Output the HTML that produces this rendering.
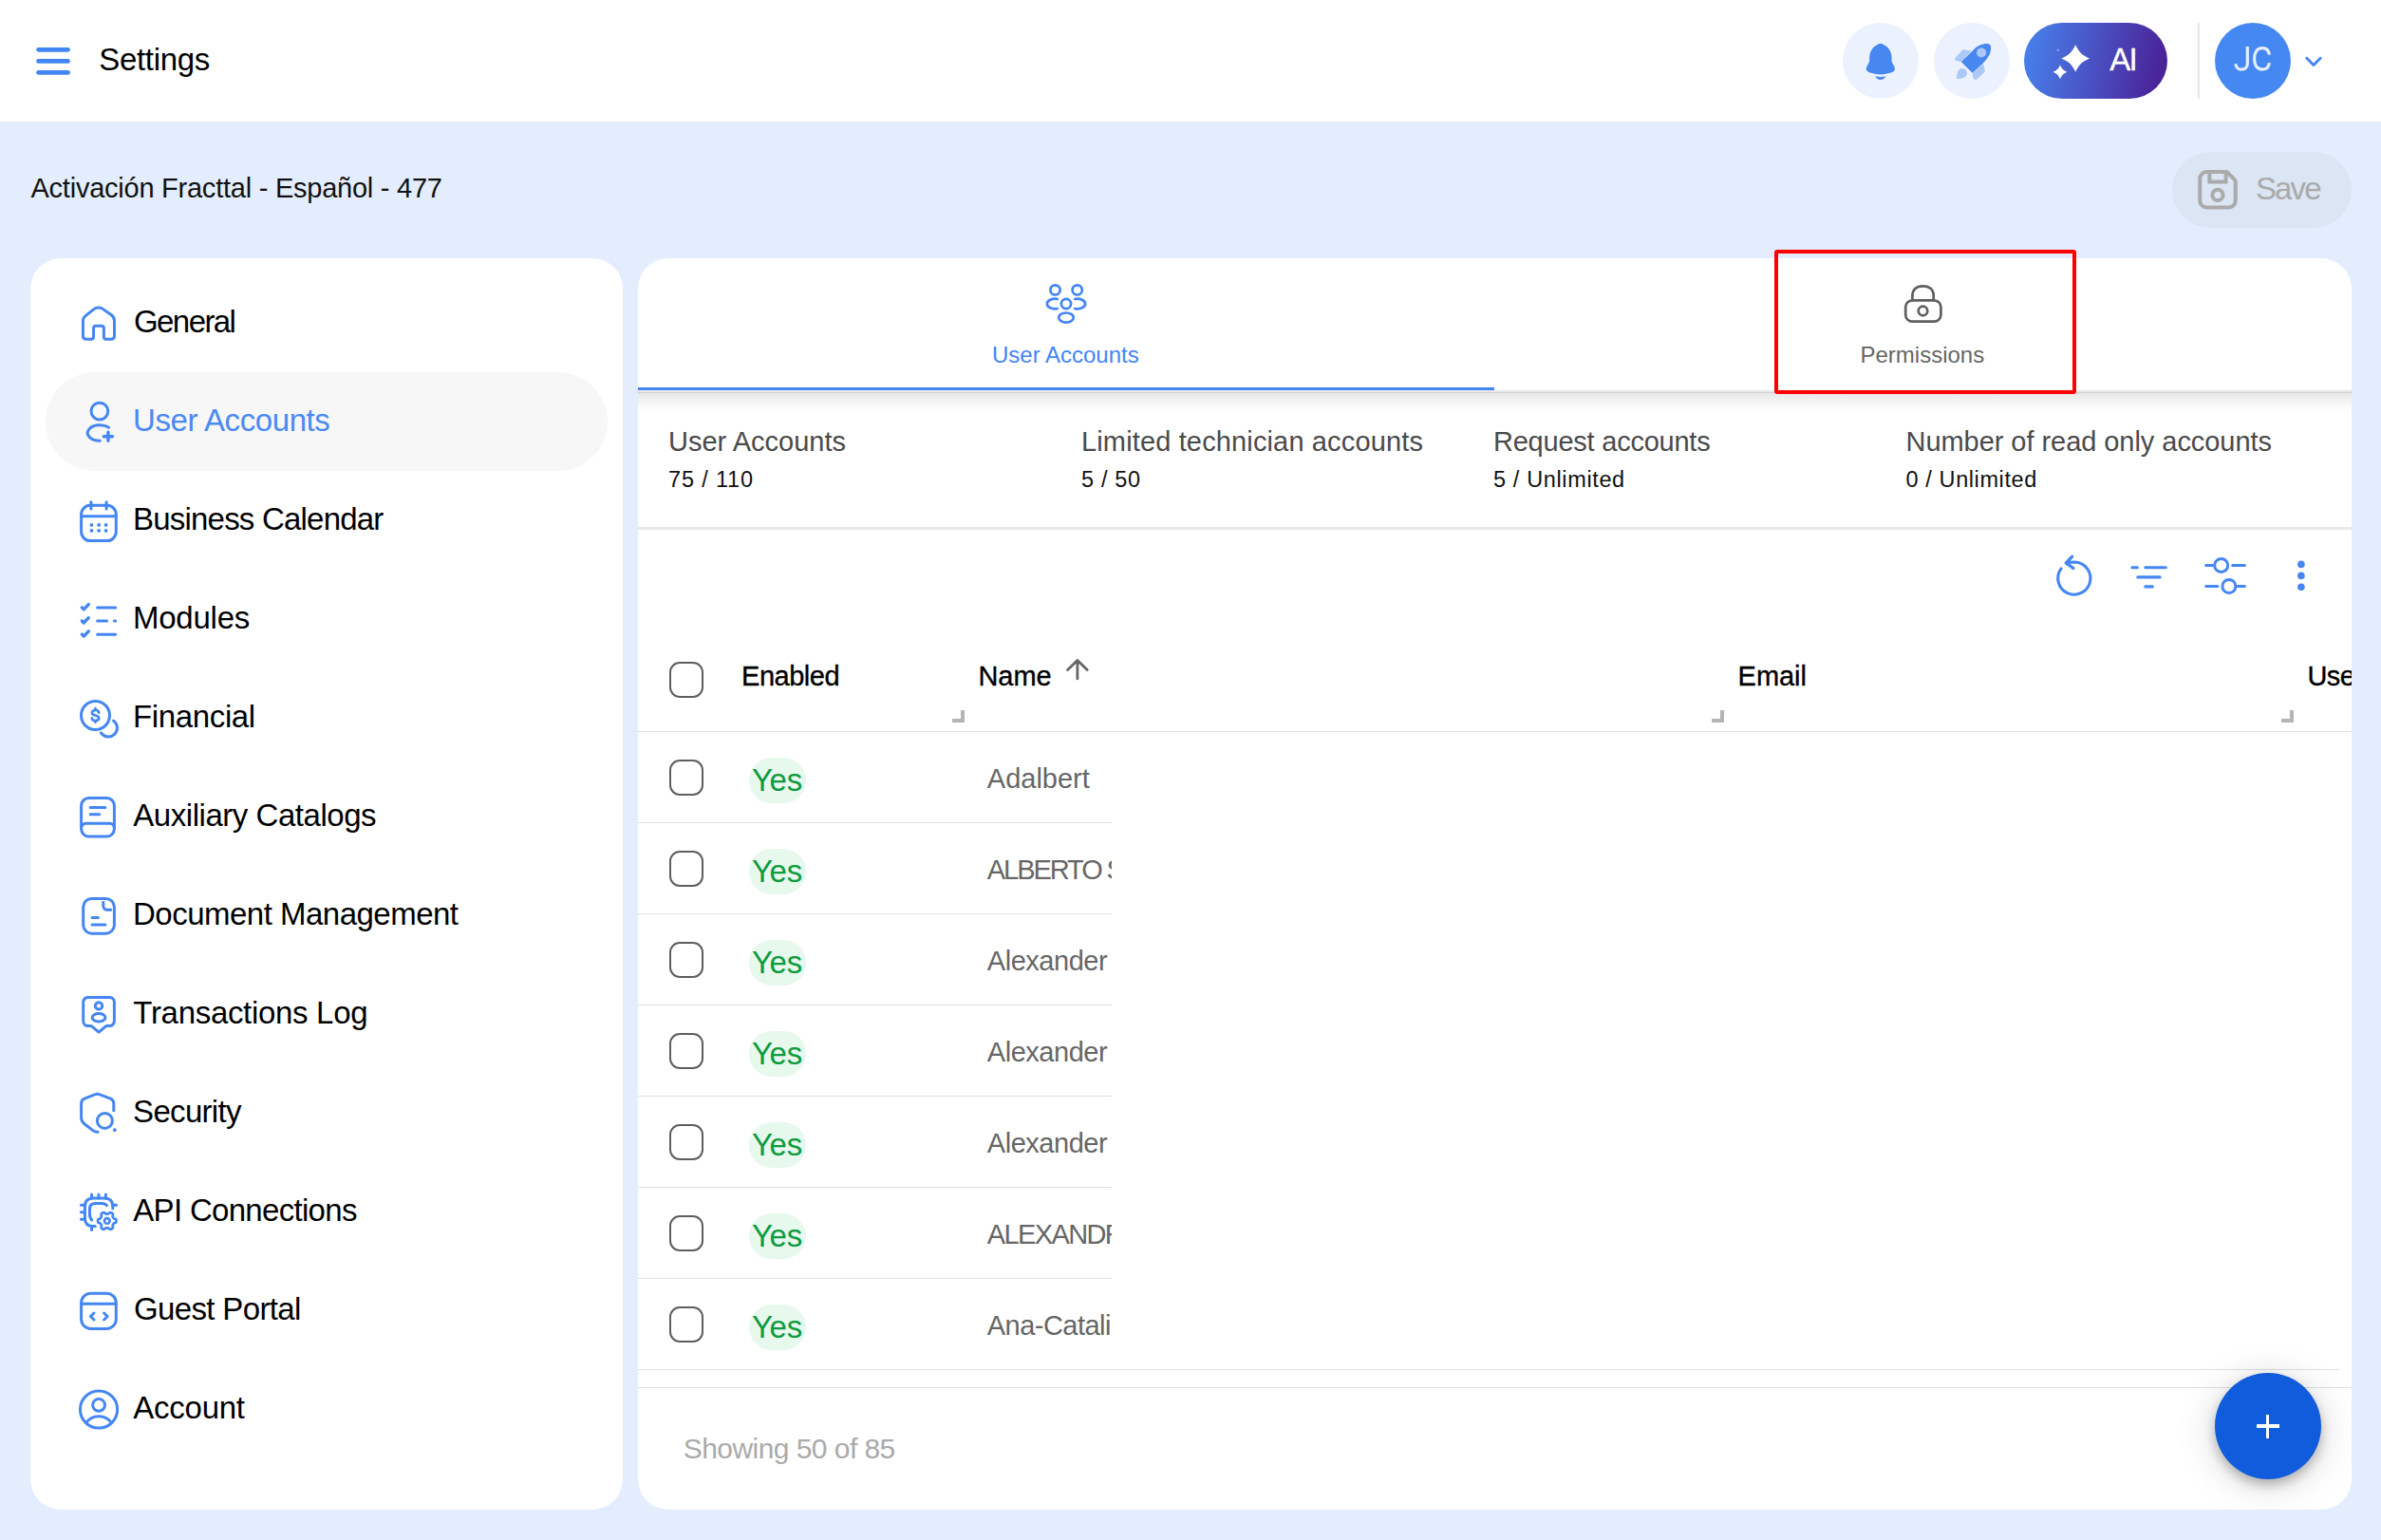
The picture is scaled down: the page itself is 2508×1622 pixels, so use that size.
<!DOCTYPE html>
<html><head><meta charset="utf-8"><title>Settings</title>
<style>
html,body{margin:0;padding:0}
body{width:2508px;height:1622px;overflow:hidden;background:#e3edfd;position:relative;font-family:"Liberation Sans",sans-serif}
.a{position:absolute}
.t{position:absolute;white-space:pre;line-height:1}
svg{position:absolute;overflow:visible}
.card{position:absolute;background:#fff;border-radius:32px}
.ln{position:absolute;background:#dfdfdf;height:1px}
.cb{position:absolute;width:32px;height:34px;border:2px solid #5e5e5e;border-radius:11px;background:#fff}
.yes{position:absolute;width:60px;height:48px;border-radius:24px;background:#e7f8ed}
.hd{position:absolute;width:9px;height:9px;border-right:4px solid #b4b4b4;border-bottom:4px solid #b4b4b4}
</style></head><body>

<div class="a" style="left:0;top:0;width:2508px;height:128px;background:#fff"></div>
<svg style="left:38px;top:49px" width="36" height="30" viewBox="0 0 36 30"><g stroke="#4285f4" stroke-width="4.7" stroke-linecap="round"><path d="M2.5 3.3H33.6M2.5 15.4H33.6M2.5 27.4H33.6"/></g></svg>
<div class="t" style="left:104.2px;top:46.4px;font-size:33px;color:#000;letter-spacing:-0.30px;">Settings</div>
<div class="a" style="left:1941px;top:24px;width:80px;height:80px;border-radius:50%;background:#ebf2fe"></div>
<div class="a" style="left:2037px;top:24px;width:80px;height:80px;border-radius:50%;background:#ebf2fe"></div>
<svg style="left:1961px;top:40px" width="40" height="48" viewBox="0 0 40 48" ><path fill="#4787f0" d="M19.85 5.90C18.20 5.90 16.80 6.60 15.95 7.60C13.50 8.60 11.30 10.80 9.90 13.40C8.60 15.80 8.15 18.20 8.15 21.00C8.15 21.90 8.15 22.80 8.15 23.60C8.15 25.00 7.60 26.00 6.90 27.20C6.40 28.10 5.90 29.00 5.40 29.90C4.60 31.40 4.50 33.00 5.40 34.50C6.30 35.80 8.20 36.30 10.50 37.00C13.50 37.90 16.50 38.40 19.85 38.40C23.20 38.40 26.20 37.90 29.20 37.00C31.50 36.30 33.40 35.80 34.30 34.50C35.20 33.00 35.10 31.40 34.30 29.90C33.80 29.00 33.30 28.10 32.80 27.20C32.10 26.00 31.55 25.00 31.55 23.60C31.55 22.80 31.55 21.90 31.55 21.00C31.55 18.20 31.10 15.80 29.80 13.40C28.40 10.80 26.20 8.60 23.75 7.60C22.90 6.60 21.50 5.90 19.85 5.90ZM14.3 40.2Q19.85 41.7 25.4 40.2C24.4 42.6 22.3 44 19.85 44C17.4 44 15.3 42.6 14.3 40.2Z"/></svg>
<svg style="left:2055px;top:40px" width="48" height="48" viewBox="0 0 48 48" ><g fill="#abc8f7"><path d="M13.600 12.200L21.500 13.500L11 25.600L5.600 24Q3.200 23.200 4.500 21L11.500 13.200Q12.300 12 13.600 12.200Z"/><path d="M33.700 26.300L35.700 33.500Q36.100 35 35 36.200L28 43Q26 44.600 24.500 43.500Q23.200 42.500 23 40.500L22.600 36.900Z"/><path d="M12 32C15 32 17 34.300 16.900 37C16.800 39.500 15.500 41 13.500 41.700C11.500 42.400 8.500 43 6.800 43C5.900 43 5.800 42.300 5.900 41.500C6.200 39 6.600 36.500 7.600 34.700C8.600 33 10.200 32 12 32Z"/></g><path fill="#4787f0" d="M10.870 25.360L26.060 10.360C28 8.600 31.500 6.600 35.800 6.100C37.500 5.900 39 6 39.700 6.270C41 6.700 41.800 7.500 42 9C42.300 11 42 13.500 41.260 15.820C40.500 18.300 38 22 35.030 25.170L22.560 36.860Z"/><circle cx="32.100" cy="15.430" r="5.050" fill="#abc8f7"/></svg>
<div class="a" style="left:2132px;top:24px;width:151px;height:80px;border-radius:40px;background:linear-gradient(100deg,#4684ee 0%,#4a55c6 45%,#4a1b92 100%)"></div>
<svg style="left:2156px;top:40px" width="52" height="48" viewBox="0 0 52 48" ><path fill="#fff" d="M30.2 7.199999999999999C34.196 15.322399999999998 36.5936 17.639 45.0 21.5C36.5936 25.361 34.196 27.6776 30.2 35.8C26.204 27.6776 23.806399999999996 25.361 15.399999999999999 21.5C23.806399999999996 17.639 26.204 15.322399999999998 30.2 7.199999999999999Z"/><path fill="#fff" d="M14 28.4C16.025 32.603199999999994 17.240000000000002 33.802 21.5 35.8C17.240000000000002 37.797999999999995 16.025 38.9968 14 43.199999999999996C11.975 38.9968 10.76 37.797999999999995 6.5 35.8C10.76 33.802 11.975 32.603199999999994 14 28.4Z"/><circle cx="11.800" cy="12.800" r="1.300" fill="#8fa2e6"/></svg>
<div class="t" style="left:2222.2px;top:45.7px;font-size:33px;color:#fff;letter-spacing:-1.60px;-webkit-text-stroke:0.3px #fff;">AI</div>
<div class="a" style="left:2315px;top:24px;width:2px;height:80px;background:#e6e6e6"></div>
<div class="a" style="left:2333px;top:24px;width:80px;height:80px;border-radius:50%;background:#4688f1"></div>
<svg style="left:2340px;top:40px" width="64" height="48" viewBox="0 0 64 48"><g fill="none" stroke="#e6eefd" stroke-width="3.2"><path d="M27.3 9.1V27C27.3 31 24.6 33.2 21.2 33.2C17.6 33.2 15 31 14.9 27.2"/><path d="M50.4 17.6C49.8 13 47 10.6 43 10.6C37.600 10.600 34.600 14.900 34.600 21.850C34.600 28.800 37.600 33.100 43 33.100C47 33.100 49.800 30.700 50.400 26.100"/></g></svg>
<svg style="left:2426px;top:57px" width="22" height="16" viewBox="0 0 22 16"><path d="M3.8 4.3L11 11.5L18.2 4.3" fill="none" stroke="#4687f2" stroke-width="3" stroke-linecap="round" stroke-linejoin="round"/></svg>
<div class="t" style="left:32.5px;top:183.8px;font-size:29px;color:#111;letter-spacing:-0.24px;">Activación Fracttal - Español - 477</div>
<div class="a" style="left:2288px;top:160px;width:189px;height:80px;border-radius:40px;background:#dbe5f4"></div>
<svg style="left:2314px;top:178px" width="44" height="44" viewBox="0 0 44 44" ><g fill="none" stroke="#aaa" stroke-width="4" stroke-linecap="round" stroke-linejoin="round"><path d="M10.300 3.100H30.600a2.500 2.500 0 0 1 1.800 0.700L40 11.400a2.500 2.500 0 0 1 0.700 1.800V33.500a7 7 0 0 1-7 7H10.300a7 7 0 0 1-7-7V10.100a7 7 0 0 1 7-7Z"/><path d="M13.400 3.300V13.600H30.600V3.300" stroke-linejoin="miter"/><circle cx="22" cy="27.400" r="5.600"/></g></svg>
<div class="t" style="left:2375.9px;top:181.9px;font-size:33px;color:#aaa;letter-spacing:-1.83px;">Save</div>
<div class="card" style="left:32px;top:272px;width:624px;height:1318px"></div>
<div class="a" style="left:48px;top:392px;width:592px;height:104px;border-radius:52px;background:#f7f7f7"></div>
<svg style="left:84px;top:319px" width="40" height="44" viewBox="0 0 40 44" ><g fill="none" stroke="#4486f3" stroke-width="3" stroke-linecap="round" stroke-linejoin="round"><path d="M14.55 26.6V35.8Q14.55 38.3 12.05 38.3H6.74Q3.44 38.3 3.44 35V18.83C3.44 16.4 4.5 14.9 6.36 13.38L14.93 6.56C17.5 4.6 21.8 4.6 24.29 6.36L33.64 12.99C35.5 14.5 36.48 16.2 36.48 18.83V35Q36.48 38.3 33.18 38.3H27.88Q25.38 38.3 25.38 35.8V26.6Q25.38 24.29 23.08 24.29H16.85Q14.55 24.29 14.55 26.6Z"/></g></svg>
<div class="t" style="left:141.0px;top:321.9px;font-size:33px;color:#000;letter-spacing:-1.58px;">General</div>
<svg style="left:84px;top:423px" width="40" height="44" viewBox="0 0 40 44" ><g fill="none" stroke="#4486f3" stroke-width="3" stroke-linecap="round" stroke-linejoin="round"><circle cx="20.9" cy="10.1" r="8.9"/><path d="M30.6 27.2A13 8.3 0 1 0 21.3 41.3"/><path d="M25.3 36.7H34.5M29.9 32.2V41.2" stroke-width="3.4"/></g></svg>
<div class="t" style="left:140.0px;top:425.9px;font-size:33px;color:#4a8af4;letter-spacing:-0.41px;">User Accounts</div>
<svg style="left:84px;top:527px" width="40" height="44" viewBox="0 0 40 44" ><g fill="none" stroke="#4486f3" stroke-width="3" stroke-linecap="round" stroke-linejoin="round"><rect x="1.6" y="5.3" width="36.7" height="37.3" rx="9.5" ry="9.5"/><path d="M11.9 1.8V9M28.1 1.8V9M2 16.7H38"/></g><g fill="#4486f3"><circle cx="12.4" cy="25.9" r="1.9"/><circle cx="12.4" cy="31.9" r="1.9"/><circle cx="20.1" cy="25.9" r="1.9"/><circle cx="20.1" cy="31.9" r="1.9"/><circle cx="27.6" cy="25.9" r="1.9"/><circle cx="27.6" cy="31.9" r="1.9"/></g></svg>
<div class="t" style="left:140.0px;top:530.0px;font-size:33px;color:#000;letter-spacing:-0.79px;">Business Calendar</div>
<svg style="left:84px;top:631px" width="40" height="44" viewBox="0 0 40 44" ><g fill="none" stroke="#4486f3" stroke-width="3" stroke-linecap="round" stroke-linejoin="round"><path d="M2.3 8.9L4.3 10.9L9.3 5.6M2.3 23.0L4.3 25.0L9.3 19.7M2.3 37.1L4.3 39.1L9.3 33.8" stroke-width="3.4"/><path d="M18.6 9H37.7M18.6 23.1H28.6M36.4 23.1H37.7M18.6 37.2H37.7"/></g></svg>
<div class="t" style="left:140.0px;top:634.0px;font-size:33px;color:#000;letter-spacing:-0.25px;">Modules</div>
<svg style="left:84px;top:735px" width="40" height="44" viewBox="0 0 40 44" ><g fill="none" stroke="#4486f3" stroke-width="3" stroke-linecap="round" stroke-linejoin="round"><circle cx="16.5" cy="18.5" r="15"/><path d="M35.6 24.2A9.3 9.3 0 1 1 22.4 36.9"/></g><g fill="none" stroke="#4486f3" stroke-width="2.7" stroke-linecap="round" stroke-linejoin="round"><path d="M20.1 15.7C20.1 14 18.7 13 16.5 13C14.3 13 12.9 14.1 12.9 15.8C12.9 17.4 14.2 18 16.5 18.5C18.8 19 20.2 19.7 20.2 21.3C20.2 23 18.8 24 16.5 24C14.2 24 12.8 23 12.8 21.3M16.5 11.2V13M16.5 24V25.8"/></g></svg>
<div class="t" style="left:140.0px;top:738.0px;font-size:33px;color:#000;letter-spacing:-0.36px;">Financial</div>
<svg style="left:84px;top:839px" width="40" height="44" viewBox="0 0 40 44" ><g fill="none" stroke="#4486f3" stroke-width="3" stroke-linecap="round" stroke-linejoin="round"><rect x="1.6" y="1.5" width="34.8" height="40.6" rx="8" ry="8"/><path d="M1.6 33.2a5 5 0 0 1 5-5H31.4a5 5 0 0 1 5 5M11.1 11.5H26.9M11.1 18.8H20.7"/></g></svg>
<div class="t" style="left:140.3px;top:842.0px;font-size:33px;color:#000;letter-spacing:-0.46px;">Auxiliary Catalogs</div>
<svg style="left:84px;top:943px" width="40" height="44" viewBox="0 0 40 44" ><g fill="none" stroke="#4486f3" stroke-width="3" stroke-linecap="round" stroke-linejoin="round"><rect x="3.7" y="3.4" width="32.7" height="36.8" rx="9" ry="9"/><path d="M24.8 7.2V11.3a4 4 0 0 0 4 4H32.6M13 23.5H19.4M13 31H26.9"/></g></svg>
<div class="t" style="left:140.0px;top:946.0px;font-size:33px;color:#000;letter-spacing:-0.51px;">Document Management</div>
<svg style="left:84px;top:1047px" width="40" height="44" viewBox="0 0 40 44" ><g fill="none" stroke="#4486f3" stroke-width="3" stroke-linecap="round" stroke-linejoin="round"><path d="M8.7 3.4H31.4a5 5 0 0 1 5 5V28.6a5 5 0 0 1-5 5H29.2a4 4 0 0 0-2.6 1L20.06 40.2L13.5 34.6a4 4 0 0 0-2.6-1H8.7a5 5 0 0 1-5-5V8.4a5 5 0 0 1 5-5Z"/><circle cx="20.06" cy="12.4" r="3.7"/><ellipse cx="20.06" cy="24.8" rx="6.9" ry="4.3"/></g></svg>
<div class="t" style="left:140.3px;top:1050.0px;font-size:33px;color:#000;letter-spacing:-0.31px;">Transactions Log</div>
<svg style="left:84px;top:1151px" width="40" height="44" viewBox="0 0 40 44" ><g fill="none" stroke="#4486f3" stroke-width="3" stroke-linecap="round" stroke-linejoin="round"><path d="M35.8 18.7V11.2a5.5 5.5 0 0 0-3.4-5.1L20.6 1.7a5.5 5.5 0 0 0-4.2 0L5 6.1a5.5 5.5 0 0 0-3.4 5.1V26.3a8 8 0 0 0 3 6.2L13.8 39.6a8 8 0 0 0 5.2 1.7"/><circle cx="26.4" cy="29.4" r="8"/></g><circle cx="36.8" cy="39.2" r="1.9" fill="#4486f3"/></svg>
<div class="t" style="left:140.1px;top:1154.0px;font-size:33px;color:#000;letter-spacing:-0.69px;">Security</div>
<svg style="left:84px;top:1255px" width="40" height="44" viewBox="0 0 40 44" ><g fill="none" stroke="#4486f3" stroke-width="3" stroke-linecap="round" stroke-linejoin="round"><path d="M34.8 17.7V15.5C34.8 9.5 32 6.9 26 6.9H14.2C8.2 6.9 5.4 9.5 5.4 15.5V28C5.4 34 8.2 36.6 14.2 36.6H16.3"/><path d="M28.4 14.6C27.2 13 25.5 12.4 23.5 12.4H16.5C12.5 12.4 10.45 14.4 10.45 18.4V23C10.45 26 11 28.3 12.6 29.9"/><path d="M12.52 3.1V6.9M19.92 3.1V6.9M27.4 3.1V6.9M1.4 14.35H5.4M1.4 21.75H5.4M1.4 29.15H5.4M34.8 14.35H38.6M12.52 36.6V40.5"/><path d="M38.49 30.90 L38.46 31.54 L38.34 32.16 L37.96 32.73 L37.03 33.11 L36.09 33.38 L35.66 33.75 L35.40 34.17 L35.16 34.59 L34.91 35.01 L34.68 35.44 L34.58 35.99 L34.82 36.95 L34.95 37.95 L34.64 38.55 L34.16 38.97 L33.63 39.32 L33.06 39.61 L32.46 39.81 L31.78 39.78 L30.98 39.16 L30.28 38.48 L29.74 38.29 L29.25 38.27 L28.77 38.28 L28.29 38.27 L27.80 38.29 L27.26 38.48 L26.56 39.16 L25.76 39.78 L25.08 39.81 L24.48 39.61 L23.91 39.32 L23.38 38.97 L22.90 38.55 L22.59 37.95 L22.72 36.95 L22.96 35.99 L22.86 35.44 L22.63 35.01 L22.38 34.59 L22.14 34.17 L21.88 33.75 L21.45 33.38 L20.51 33.11 L19.58 32.73 L19.20 32.16 L19.08 31.54 L19.05 30.90 L19.08 30.26 L19.20 29.64 L19.58 29.07 L20.51 28.69 L21.45 28.42 L21.88 28.05 L22.14 27.63 L22.38 27.21 L22.63 26.79 L22.86 26.36 L22.96 25.81 L22.72 24.85 L22.59 23.85 L22.90 23.25 L23.38 22.83 L23.91 22.48 L24.48 22.19 L25.08 21.99 L25.76 22.02 L26.56 22.64 L27.26 23.32 L27.80 23.51 L28.29 23.53 L28.77 23.52 L29.25 23.53 L29.74 23.51 L30.28 23.32 L30.98 22.64 L31.78 22.02 L32.46 21.99 L33.06 22.19 L33.63 22.48 L34.16 22.83 L34.64 23.25 L34.95 23.85 L34.82 24.85 L34.58 25.81 L34.68 26.36 L34.91 26.79 L35.16 27.21 L35.40 27.63 L35.66 28.05 L36.09 28.42 L37.03 28.69 L37.96 29.07 L38.34 29.64 L38.46 30.26Z" stroke-width="2.7"/><circle cx="28.77" cy="30.9" r="2.85" stroke-width="2.7"/></g></svg>
<div class="t" style="left:140.3px;top:1258.0px;font-size:33px;color:#000;letter-spacing:-0.69px;">API Connections</div>
<svg style="left:84px;top:1359px" width="40" height="44" viewBox="0 0 40 44" ><g fill="none" stroke="#4486f3" stroke-width="3" stroke-linecap="round" stroke-linejoin="round"><rect x="1.6" y="3.2" width="36.7" height="37.2" rx="10" ry="10"/><path d="M2 14.3H38M15 24L11.4 27.5L15 31M25.6 24L29.2 27.5L25.6 31"/></g></svg>
<div class="t" style="left:141.0px;top:1362.0px;font-size:33px;color:#000;letter-spacing:-0.64px;">Guest Portal</div>
<svg style="left:84px;top:1463px" width="40" height="44" viewBox="0 0 40 44" ><g fill="none" stroke="#4486f3" stroke-width="3" stroke-linecap="round" stroke-linejoin="round"><circle cx="20.05" cy="21.5" r="19.6"/><circle cx="20.05" cy="16.8" r="6.4"/><path d="M6.9 35.2A16.5 16.5 0 0 1 33.2 35.2"/></g></svg>
<div class="t" style="left:140.3px;top:1466.0px;font-size:33px;color:#000;letter-spacing:-0.25px;">Account</div>
<div class="card" style="left:672px;top:272px;width:1805px;height:1318px;overflow:hidden">
<div class="a" style="left:-672px;top:-272px;width:2508px;height:1622px">
<div class="a" style="left:672px;top:411px;width:1805px;height:2px;background:#e8e8e8"></div><div class="a" style="left:672px;top:413px;width:1805px;height:1px;background:#d2d2d2"></div><div class="a" style="left:672px;top:414px;width:1805px;height:23px;background:linear-gradient(to bottom,#e4e4e4 0,#e8e8e8 1px,#ececec 3px,#f0f0f0 6.4px,#f5f5f5 10px,#fafafa 13.4px,#fdfdfd 17px,#fff 22px)"></div>
<div class="a" style="left:672px;top:408px;width:902px;height:3px;background:#4285f4"></div>
<svg style="left:1100px;top:296px" width="48" height="48" viewBox="0 0 48 48" ><g fill="none" stroke="#4285f4" stroke-width="2.7" stroke-linecap="round" stroke-linejoin="round"><circle cx="11.500" cy="9.400" r="5.100"/><circle cx="34.700" cy="9.400" r="5.100"/><circle cx="23" cy="24" r="5.100"/><ellipse cx="23" cy="38.600" rx="7.800" ry="5.100"/><path d="M13.800 19.000A8.200 5.300 0 1 0 13.800 29.000"/><path d="M32.200 19.000A8.200 5.300 0 1 1 32.200 29.000"/></g></svg>
<svg style="left:2002px;top:296px" width="48" height="48" viewBox="0 0 48 48" ><g fill="none" stroke="#5f5f5f" stroke-width="2.7" stroke-linecap="round" stroke-linejoin="round"><rect x="5.200" y="20.300" width="37.200" height="22.400" rx="7.2" ry="7.2"/><path d="M12.400 20.300V15.500C12.400 9 16.500 5.300 23.550 5.300C30.600 5.300 34.700 9 34.700 15.500V20.300"/><circle cx="23.500" cy="31.500" r="4.800"/></g></svg>
<div class="t" style="left:1045.0px;top:361.6px;font-size:24px;color:#4285f4;">User Accounts</div>
<div class="t" style="left:1959.5px;top:361.6px;font-size:24px;color:#666;">Permissions</div>
<div class="t" style="left:704.0px;top:450.8px;font-size:29px;color:#4a4a4a;">User Accounts</div>
<div class="t" style="left:704.0px;top:493.9px;font-size:23.5px;color:#111;letter-spacing:0.83px;">75 / 110</div>
<div class="t" style="left:1139.0px;top:450.8px;font-size:29px;color:#4a4a4a;letter-spacing:0.14px;">Limited technician accounts</div>
<div class="t" style="left:1139.0px;top:493.9px;font-size:23.5px;color:#111;letter-spacing:0.64px;">5 / 50</div>
<div class="t" style="left:1573.0px;top:450.8px;font-size:29px;color:#4a4a4a;letter-spacing:-0.23px;">Request accounts</div>
<div class="t" style="left:1573.0px;top:493.9px;font-size:23.5px;color:#111;letter-spacing:0.63px;">5 / Unlimited</div>
<div class="t" style="left:2007.5px;top:450.8px;font-size:29px;color:#4a4a4a;letter-spacing:-0.05px;">Number of read only accounts</div>
<div class="t" style="left:2007.5px;top:493.9px;font-size:23.5px;color:#111;letter-spacing:0.60px;">0 / Unlimited</div>
<div class="a" style="left:672px;top:555px;width:1805px;height:3px;background:#e9e9e9"></div>
<svg style="left:2160.6px;top:580px" width="50" height="52" viewBox="0 0 50 52" ><g fill="none" stroke="#4486f3" stroke-width="3.1" stroke-linecap="round" stroke-linejoin="round"><path d="M15.300 12.900C18 12.200 21 12 24.250 12A17.100 17.100 0 1 1 10.100 18.900"/><path d="M21.750 6.200L15.300 12.900L22.900 18.500" stroke-width="3.3"/></g></svg>
<svg style="left:2240px;top:588px" width="48" height="36" viewBox="0 0 48 36" ><g fill="none" stroke="#4486f3" stroke-width="3.1" stroke-linecap="round" stroke-linejoin="round"><path d="M5.900 9.700H11.400M19.800 9.700H41.300M11.800 19.900H35.100M19.800 29.900H27.300"/></g></svg>
<svg style="left:2318px;top:582px" width="52" height="48" viewBox="0 0 52 48" ><g fill="none" stroke="#4486f3" stroke-width="3" stroke-linecap="round" stroke-linejoin="round"><circle cx="21.700" cy="13.400" r="7"/><circle cx="29.900" cy="35.500" r="7"/><path d="M5.700 13.400H12.600M33.700 13.400H46.400M5.700 35.500H17.900M38.900 35.500H46.400"/></g></svg>
<svg style="left:2416px;top:586px" width="16" height="40" viewBox="0 0 16 40" ><g fill="#4486f3"><circle cx="7.900" cy="8.400" r="3.800"/><circle cx="7.900" cy="20.400" r="3.800"/><circle cx="7.900" cy="32.300" r="3.800"/></g></svg>
<div class="cb" style="left:705px;top:697px;height:33.5px"></div>
<div class="t" style="left:781.1px;top:698.1px;font-size:29px;color:#000;letter-spacing:-0.50px;-webkit-text-stroke:0.35px #000;">Enabled</div>
<div class="t" style="left:1030.5px;top:698.1px;font-size:29px;color:#000;letter-spacing:-0.07px;-webkit-text-stroke:0.35px #000;">Name</div>
<svg style="left:1120px;top:690px" width="30" height="30" viewBox="0 0 30 30" ><g fill="none" stroke="#666" stroke-width="2.8" stroke-linecap="round" stroke-linejoin="round"><path d="M14.9 24.9V5.7M4.6 15.4L14.9 5.4L25.2 15.4"/></g></svg>
<div class="t" style="left:1830.6px;top:698.1px;font-size:29px;color:#000;letter-spacing:-0.05px;-webkit-text-stroke:0.35px #000;">Email</div>
<div class="t" style="left:2430.4px;top:698.1px;font-size:29px;color:#000;letter-spacing:-0.60px;-webkit-text-stroke:0.35px #000;">User Type</div>
<div class="hd" style="left:1003px;top:748px"></div>
<div class="hd" style="left:1803px;top:748px"></div>
<div class="hd" style="left:2403px;top:748px"></div>
<div class="ln" style="left:672px;top:770px;width:1805px"></div>
<div class="a" style="left:672px;top:771px;width:499px;height:700px;overflow:hidden"><div class="a" style="left:-672px;top:-771px">
<div class="cb" style="left:705px;top:800.4px"></div>
<div class="yes" style="left:789px;top:798px"></div>
<div class="t" style="left:791.9px;top:805.0px;font-size:33px;color:#0c9b3e;letter-spacing:-0.30px;">Yes</div>
<div class="t" style="left:1039.8px;top:805.8px;font-size:29px;color:#666;">Adalbert</div>
<div class="ln" style="left:672px;top:866px;width:499px"></div>
<div class="cb" style="left:705px;top:896.4px"></div>
<div class="yes" style="left:789px;top:894px"></div>
<div class="t" style="left:791.9px;top:901.0px;font-size:33px;color:#0c9b3e;letter-spacing:-0.30px;">Yes</div>
<div class="t" style="left:1039.8px;top:901.8px;font-size:29px;color:#666;letter-spacing:-2.07px;">ALBERTO SANCHEZ</div>
<div class="ln" style="left:672px;top:962px;width:499px"></div>
<div class="cb" style="left:705px;top:992.4px"></div>
<div class="yes" style="left:789px;top:990px"></div>
<div class="t" style="left:791.9px;top:997.0px;font-size:33px;color:#0c9b3e;letter-spacing:-0.30px;">Yes</div>
<div class="t" style="left:1039.8px;top:997.8px;font-size:29px;color:#666;letter-spacing:-0.47px;">Alexander Gomez</div>
<div class="ln" style="left:672px;top:1058px;width:499px"></div>
<div class="cb" style="left:705px;top:1088.4px"></div>
<div class="yes" style="left:789px;top:1086px"></div>
<div class="t" style="left:791.9px;top:1093.0px;font-size:33px;color:#0c9b3e;letter-spacing:-0.30px;">Yes</div>
<div class="t" style="left:1039.8px;top:1093.8px;font-size:29px;color:#666;letter-spacing:-0.47px;">Alexander Lopez</div>
<div class="ln" style="left:672px;top:1154px;width:499px"></div>
<div class="cb" style="left:705px;top:1184.4px"></div>
<div class="yes" style="left:789px;top:1182px"></div>
<div class="t" style="left:791.9px;top:1189.0px;font-size:33px;color:#0c9b3e;letter-spacing:-0.30px;">Yes</div>
<div class="t" style="left:1039.8px;top:1189.8px;font-size:29px;color:#666;letter-spacing:-0.47px;">Alexander Ruiz</div>
<div class="ln" style="left:672px;top:1250px;width:499px"></div>
<div class="cb" style="left:705px;top:1280.4px"></div>
<div class="yes" style="left:789px;top:1278px"></div>
<div class="t" style="left:791.9px;top:1285.0px;font-size:33px;color:#0c9b3e;letter-spacing:-0.30px;">Yes</div>
<div class="t" style="left:1039.8px;top:1285.8px;font-size:29px;color:#666;letter-spacing:-1.62px;">ALEXANDRA MARIN</div>
<div class="ln" style="left:672px;top:1346px;width:499px"></div>
<div class="cb" style="left:705px;top:1376.4px"></div>
<div class="yes" style="left:789px;top:1374px"></div>
<div class="t" style="left:791.9px;top:1381.0px;font-size:33px;color:#0c9b3e;letter-spacing:-0.30px;">Yes</div>
<div class="t" style="left:1039.8px;top:1381.8px;font-size:29px;color:#666;letter-spacing:-0.53px;">Ana-Catalina Diaz</div>
</div></div>
<div class="ln" style="left:672px;top:1442px;width:1792px"></div>
<div class="ln" style="left:672px;top:1461px;width:1805px"></div>
<div class="t" style="left:719.8px;top:1511.3px;font-size:30px;color:#aaa;letter-spacing:-0.56px;">Showing 50 of 85</div>
<div class="a" style="left:2333px;top:1446px;width:112px;height:112px;border-radius:50%;background:#105cdc;box-shadow:0 6px 12px rgba(0,0,0,.24),0 5px 40px rgba(0,0,0,.17)"></div>
<div class="a" style="left:2376.5px;top:1500.4px;width:24.5px;height:3.4px;background:#fff"></div><div class="a" style="left:2387px;top:1490px;width:3.4px;height:24.5px;background:#fff"></div>
</div></div>
<div class="a" style="left:1869px;top:263px;width:310px;height:144px;border:4px solid #fe0000;border-radius:3px"></div>
</body></html>
